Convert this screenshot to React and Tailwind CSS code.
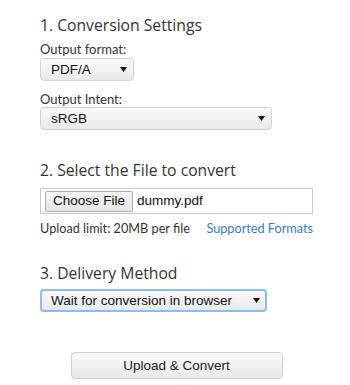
import React from "react";

function Arrow() {
  return (
    <svg width="7" height="5" viewBox="0 0 7 5" className="shrink-0">
      <polygon points="0,0 7,0 3.5,5" fill="#111" />
    </svg>
  );
}

function FakeSelect({ value, width, focus }) {
  return (
    <div
      className={`flex h-[23px] items-center justify-between rounded-[4px] bg-gradient-to-b from-[#fafafa] to-[#e9e9e9] text-[13.5px] text-[#111] ${
        focus ? "border-2 border-[#8dbcf0] pl-[9px] pr-[5px]" : "border border-[#d3d3d3] pl-[10px] pr-[6px]"
      }`}
      style={{ width }}
    >
      <span className="whitespace-nowrap font-['Liberation_Sans',Arial,sans-serif] leading-none">{value}</span>
      <Arrow />
    </div>
  );
}

export default function App() {
  const heading = "font-['Open_Sans',sans-serif] text-[15.7px] leading-[24px] text-[#333]";
  const label = "font-['Lato',sans-serif] text-[13px] leading-[16px] text-[#333]";
  return (
    <div className="min-h-[385px] w-[350px] bg-white pl-[40px] pt-[13px]">
      <div className="w-[273px]">
        <h2 className={heading}>1. Conversion Settings</h2>
        <div className={`${label} mt-[4px]`}>Output format:</div>
        <div className="mt-[1px]">
          <FakeSelect value="PDF/A" width={94} />
        </div>
        <div className={`${label} mt-[10px]`}>Output Intent:</div>
        <div>
          <FakeSelect value="sRGB" width={232} />
        </div>

        <h2 className={`${heading} mt-[28px]`}>2. Select the File to convert</h2>
        <div className="mt-[6px] flex h-[26px] w-[273px] items-center border border-[#c8c8c8] pl-[4px]">
          <div className="flex h-[21px] items-center rounded-[2px] border border-[#adadad] bg-gradient-to-b from-[#f5f5f5] to-[#e6e6e6] px-[7px] font-['Liberation_Sans',Arial,sans-serif] text-[13.5px] leading-none text-[#111]">
            Choose File
          </div>
          <span className="ml-[4px] font-['Liberation_Sans',Arial,sans-serif] text-[13.5px] leading-none text-[#111]">
            dummy.pdf
          </span>
        </div>
        <div className="mt-[6px] flex justify-between whitespace-nowrap font-['Lato',sans-serif] text-[12.7px] leading-[16px] text-[#333]">
          <span>Upload limit: 20MB per file</span>
          <span className="text-[#3a7cc0]">Supported Formats</span>
        </div>

        <h2 className={`${heading} mt-[25px]`}>3. Delivery Method</h2>
        <div className="mt-[4px]">
          <FakeSelect value="Wait for conversion in browser" width={227} focus />
        </div>

        <div className="mt-[40px] flex justify-center">
          <div className="flex h-[27px] w-[212px] items-center justify-center rounded-[4px] border border-[#cfcfcf] bg-gradient-to-b from-[#fafafa] to-[#e8e8e8] font-['Liberation_Sans',Arial,sans-serif] text-[13.5px] leading-none text-[#222]">
            Upload &amp; Convert
          </div>
        </div>
      </div>
    </div>
  );
}
